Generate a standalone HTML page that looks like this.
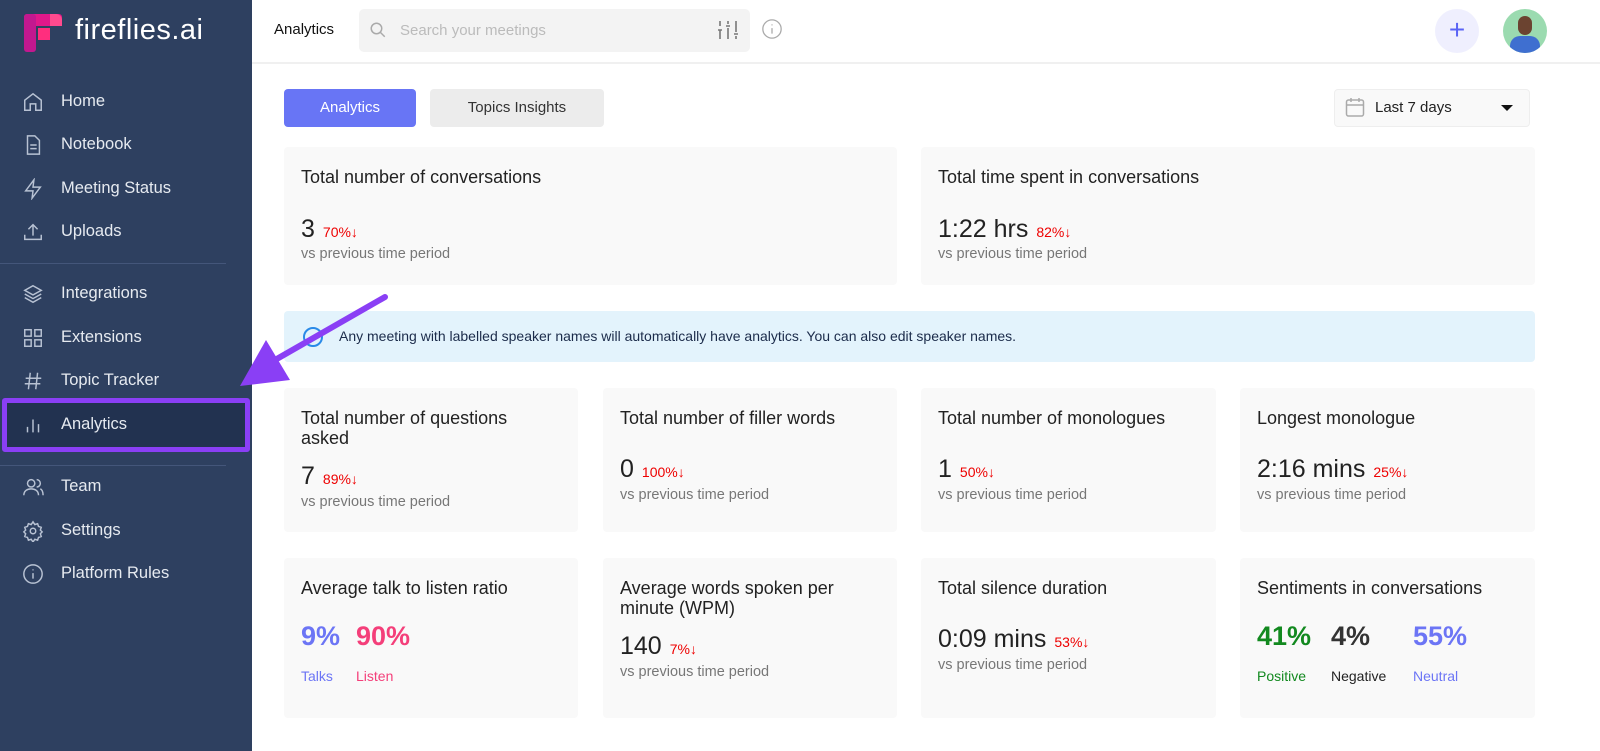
<!DOCTYPE html>
<html><head><meta charset="utf-8"><style>
*{box-sizing:border-box;margin:0;padding:0}
body{width:1600px;height:751px;overflow:hidden;background:#fff;font-family:"Liberation Sans",sans-serif;position:relative;color:#222}
.sb{position:absolute;left:0;top:0;width:252px;height:751px;background:#2e4060}
.logo{position:absolute;left:24px;top:14px}
.brand{position:absolute;left:75px;top:14px;color:#fff;font-size:29px;letter-spacing:.5px}
.nav{position:absolute;left:0;width:252px;height:40px;color:#e6eaf0;font-size:16.5px}
.nav span{position:absolute;left:61px;top:10px}
.nav svg{position:absolute;left:22px;top:9px}
.sep{position:absolute;left:0;width:226px;height:1px;background:#44567a}
.abs{position:absolute}
.card{position:absolute;background:#f9f9f9;border-radius:4px}
.ct{position:absolute;left:17px;top:20px;font-size:18px;color:#222;line-height:20px}
.big{position:absolute;left:17px;font-size:25px;color:#222}
.pct{font-size:14px;color:#e00;margin-left:8px}
.vs{position:absolute;left:17px;font-size:14.5px;color:#777}
.sbig{position:absolute;font-size:27px;font-weight:bold}
</style></head><body>
<div class="sb">
<svg class="logo" width="38" height="38" viewBox="0 0 38 38"><rect x="0" y="0" width="38" height="12" rx="3" fill="#e0188a"/><rect x="0" y="0" width="12" height="38" rx="3" fill="#c2188f"/><rect x="14" y="14" width="12" height="12" fill="#ff2e7e"/><path d="M26 0h6a6 6 0 0 1 6 6v6H26z" fill="#ff4a8e"/></svg>
<div class="brand">fireflies.ai</div>
<div class="nav" style="top:82px"><svg width="22" height="22" viewBox="0 0 24 24" fill="none" stroke="#b8c2d3" stroke-width="1.6"><path d="M3 10l9-7 9 7v11H15v-7H9v7H3z"/></svg><span>Home</span></div>
<div class="nav" style="top:125px"><svg width="22" height="22" viewBox="0 0 24 24" fill="none" stroke="#b8c2d3" stroke-width="1.6"><path d="M6 2h8l5 5v15H6z M9 12h7 M9 16h7"/></svg><span>Notebook</span></div>
<div class="nav" style="top:169px"><svg width="22" height="22" viewBox="0 0 24 24" fill="none" stroke="#b8c2d3" stroke-width="1.6"><path d="M13 2L4 14h8l-1 8 9-12h-8z"/></svg><span>Meeting Status</span></div>
<div class="nav" style="top:212px"><svg width="22" height="22" viewBox="0 0 24 24" fill="none" stroke="#b8c2d3" stroke-width="1.6"><path d="M3 15v5h18v-5 M12 16V4 M7 9l5-5 5 5"/></svg><span>Uploads</span></div>
<div class="sep" style="top:263px"></div>
<div class="nav" style="top:274px"><svg width="22" height="22" viewBox="0 0 24 24" fill="none" stroke="#b8c2d3" stroke-width="1.6"><path d="M12 3l9 5-9 5-9-5z M3 12l9 5 9-5 M3 16l9 5 9-5"/></svg><span>Integrations</span></div>
<div class="nav" style="top:318px"><svg width="22" height="22" viewBox="0 0 24 24" fill="none" stroke="#b8c2d3" stroke-width="1.6"><rect x="3" y="3" width="7" height="7"/><rect x="14" y="3" width="7" height="7"/><rect x="3" y="14" width="7" height="7"/><rect x="14" y="14" width="7" height="7"/></svg><span>Extensions</span></div>
<div class="nav" style="top:361px"><svg width="22" height="22" viewBox="0 0 24 24" fill="none" stroke="#b8c2d3" stroke-width="1.6"><path d="M9 3L7 21 M17 3l-2 18 M4 9h17 M3 15h17"/></svg><span>Topic Tracker</span></div>
<div class="abs" style="left:2px;top:398px;width:248px;height:54px;border:5px solid #8a3ff5;border-radius:3px;background:#223250"></div>
<div class="nav" style="top:405px"><svg width="22" height="22" viewBox="0 0 24 24" fill="none" stroke="#b8c2d3" stroke-width="1.6"><path d="M6 20v-6 M12 20V6 M18 20v-9"/></svg><span>Analytics</span></div>
<div class="sep" style="top:465px"></div>
<div class="nav" style="top:467px"><svg width="22" height="22" viewBox="0 0 24 24" fill="none" stroke="#b8c2d3" stroke-width="1.6"><circle cx="10" cy="8" r="4"/><path d="M2 21c0-5 4-7 8-7s8 2 8 7 M16 4a4 4 0 0 1 0 8 M20 14c2 1 3 3 3 7"/></svg><span>Team</span></div>
<div class="nav" style="top:511px"><svg width="22" height="22" viewBox="0 0 24 24" fill="none" stroke="#b8c2d3" stroke-width="1.6"><circle cx="12" cy="12" r="3"/><path d="M12 2l2 3 3-1 1 3 3 1-1 3 2 2-2 2 1 3-3 1-1 3-3-1-2 3-2-3-3 1-1-3-3-1 1-3-2-2 2-2-1-3 3-1 1-3 3 1z"/></svg><span>Settings</span></div>
<div class="nav" style="top:554px"><svg width="22" height="22" viewBox="0 0 24 24" fill="none" stroke="#b8c2d3" stroke-width="1.6"><circle cx="12" cy="12" r="10"/><path d="M12 11v6 M12 7v1"/></svg><span>Platform Rules</span></div>
</div>

<div class="abs" style="left:252px;top:0;width:1348px;height:64px;border-bottom:2px solid #f0f0f0"></div>
<div class="abs" style="left:274px;top:21px;font-size:15px;color:#111">Analytics</div>
<div class="abs" style="left:359px;top:9px;width:391px;height:43px;background:#f3f3f3;border-radius:5px"></div>
<svg class="abs" style="left:369px;top:21px" width="18" height="18" viewBox="0 0 24 24" fill="none" stroke="#aaa" stroke-width="2"><circle cx="10" cy="10" r="7"/><path d="M15 15l6 6"/></svg>
<div class="abs" style="left:400px;top:22px;font-size:15px;color:#bbb">Search your meetings</div>
<svg class="abs" style="left:716px;top:19px" width="24" height="22" viewBox="0 0 24 22" fill="none" stroke="#777" stroke-width="1.6"><path d="M4 2v5 M2 11h4 M4 11v9 M12 2v3 M10 7h4 M12 9v11 M20 2v9 M18 15h4 M20 17v3 M20 11v2"/></svg>
<svg class="abs" style="left:761px;top:18px" width="22" height="22" viewBox="0 0 24 24" fill="none" stroke="#aaa" stroke-width="1.4"><circle cx="12" cy="12" r="10"/><path d="M12 11v6 M12 7v1"/></svg>
<div class="abs" style="left:1435px;top:9px;width:44px;height:44px;border-radius:50%;background:#efeffe;color:#5a63f5;font-size:28px;text-align:center;line-height:42px">+</div>
<div class="abs" style="left:1503px;top:9px;width:44px;height:44px;border-radius:50%;background:#9bdbb0;overflow:hidden"><div style="position:absolute;left:7px;top:27px;width:30px;height:20px;background:#3f6fd0;border-radius:10px 10px 0 0"></div><div style="position:absolute;left:15px;top:7px;width:14px;height:19px;background:#6b4330;border-radius:7px"></div></div>

<div class="abs" style="left:284px;top:89px;width:132px;height:38px;background:#6875f5;border-radius:4px;color:#fff;font-size:15px;text-align:center;line-height:38px">Analytics</div>
<div class="abs" style="left:430px;top:89px;width:174px;height:38px;background:#ececec;border-radius:4px;color:#333;font-size:15px;text-align:center;line-height:38px">Topics Insights</div>
<div class="abs" style="left:1334px;top:89px;width:196px;height:38px;background:#f9f9f9;border:1px solid #eee;border-radius:4px"></div>
<svg class="abs" style="left:1345px;top:97px" width="20" height="21" viewBox="0 0 20 21" fill="none" stroke="#aaa" stroke-width="1.5"><rect x="1.5" y="3" width="17" height="16" rx="2"/><path d="M1.5 8h17 M6 1v4 M14 1v4"/></svg>
<div class="abs" style="left:1375px;top:99px;font-size:15px;color:#222">Last 7 days</div>
<div class="abs" style="left:1501px;top:105px;border-left:6px solid transparent;border-right:6px solid transparent;border-top:6px solid #111"></div>

<div class="card" style="left:284px;top:147px;width:613px;height:138px"><div class="ct">Total number of conversations</div><div class="big" style="top:68px">3<span class="pct">70%↓</span></div><div class="vs" style="top:99px">vs previous time period</div></div>
<div class="card" style="left:921px;top:147px;width:614px;height:138px"><div class="ct">Total time spent in conversations</div><div class="big" style="top:68px">1:22 hrs<span class="pct">82%↓</span></div><div class="vs" style="top:99px">vs previous time period</div></div>

<div class="abs" style="left:284px;top:311px;width:1251px;height:51px;background:#e3f3fc;border-radius:4px"></div>
<div class="abs" style="left:303px;top:327px;width:20px;height:20px;border:2px solid #2a8ae8;border-radius:50%"></div>
<div class="abs" style="left:339px;top:328px;font-size:14px;color:#1b2b4a">Any meeting with labelled speaker names will automatically have analytics. You can also edit speaker names.</div>

<div class="card" style="left:284px;top:388px;width:294px;height:144px"><div class="ct">Total number of questions<br>asked</div><div class="big" style="top:74px">7<span class="pct">89%↓</span></div><div class="vs" style="top:106px">vs previous time period</div></div>
<div class="card" style="left:603px;top:388px;width:294px;height:144px"><div class="ct">Total number of filler words</div><div class="big" style="top:67px">0<span class="pct">100%↓</span></div><div class="vs" style="top:99px">vs previous time period</div></div>
<div class="card" style="left:921px;top:388px;width:295px;height:144px"><div class="ct">Total number of monologues</div><div class="big" style="top:67px">1<span class="pct">50%↓</span></div><div class="vs" style="top:99px">vs previous time period</div></div>
<div class="card" style="left:1240px;top:388px;width:295px;height:144px"><div class="ct">Longest monologue</div><div class="big" style="top:67px">2:16 mins<span class="pct">25%↓</span></div><div class="vs" style="top:99px">vs previous time period</div></div>

<div class="card" style="left:284px;top:558px;width:294px;height:160px"><div class="ct">Average talk to listen ratio</div><div class="sbig" style="left:17px;top:63px;color:#6c75f5">9%</div><div class="sbig" style="left:72px;top:63px;color:#f43f7a">90%</div><div class="abs" style="left:17px;top:110px;font-size:14px;color:#6c75f5">Talks</div><div class="abs" style="left:72px;top:110px;font-size:14px;color:#f43f7a">Listen</div></div>
<div class="card" style="left:603px;top:558px;width:294px;height:160px"><div class="ct">Average words spoken per<br>minute (WPM)</div><div class="big" style="top:74px">140<span class="pct">7%↓</span></div><div class="vs" style="top:106px">vs previous time period</div></div>
<div class="card" style="left:921px;top:558px;width:295px;height:160px"><div class="ct">Total silence duration</div><div class="big" style="top:67px">0:09 mins<span class="pct">53%↓</span></div><div class="vs" style="top:99px">vs previous time period</div></div>
<div class="card" style="left:1240px;top:558px;width:295px;height:160px"><div class="ct">Sentiments in conversations</div><div class="sbig" style="left:17px;top:63px;color:#12891f">41%</div><div class="sbig" style="left:91px;top:63px;color:#333">4%</div><div class="sbig" style="left:173px;top:63px;color:#6c75f5">55%</div><div class="abs" style="left:17px;top:110px;font-size:14px;color:#12891f">Positive</div><div class="abs" style="left:91px;top:110px;font-size:14px;color:#222">Negative</div><div class="abs" style="left:173px;top:110px;font-size:14px;color:#6c75f5">Neutral</div></div>

<svg class="abs" style="left:0;top:0" width="1600" height="751"><path d="M385 297 L275 360" stroke="#8a3ff5" stroke-width="6" stroke-linecap="round"/><path d="M240 386 L266 340 L290 380 Z" fill="#8a3ff5"/></svg>
</body></html>
